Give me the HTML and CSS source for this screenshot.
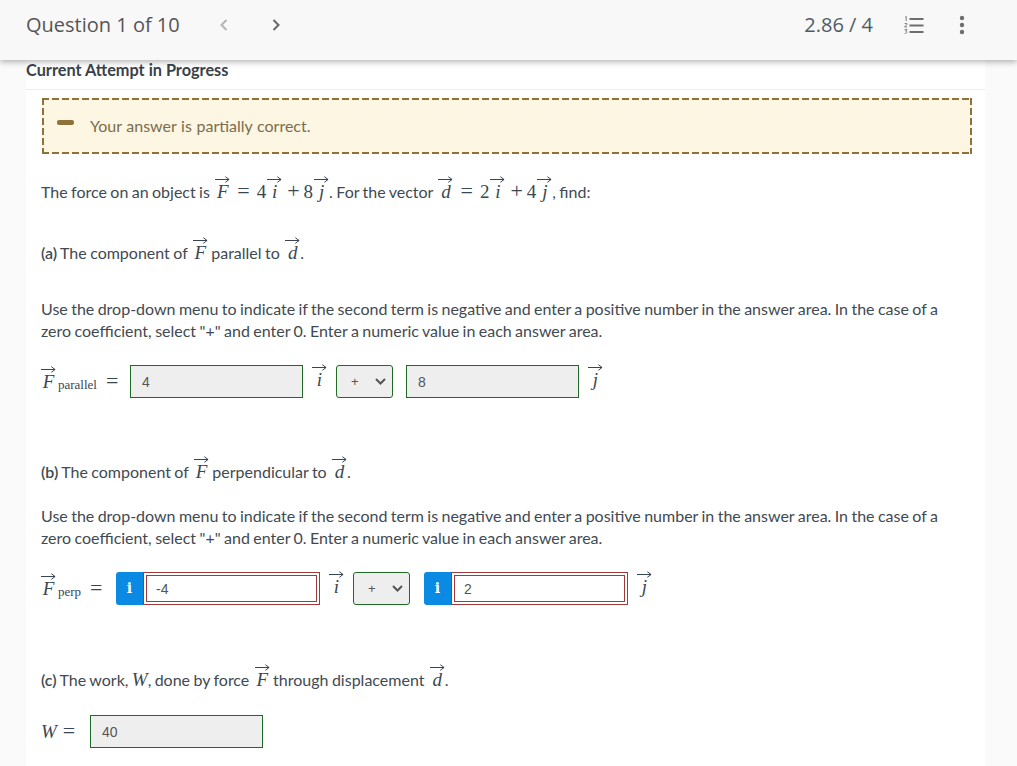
FILE: index.html
```html
<!DOCTYPE html>
<html lang="en">
<head>
  <meta charset="UTF-8">
  <title>Question 1 of 10</title>
  <link rel="stylesheet" href="styles.css">
</head>
<body>
  <svg class="defs" width="0" height="0">
    <symbol id="arrow" viewBox="0 0 16 7">
      <path d="M0 3.5H15M11 .5L15 3.5L11 6.5" fill="none" stroke="#2b3a46" stroke-width="1"/>
    </symbol>
  </svg>

  <header class="topbar">
    <div class="topbar-left">
      <span class="title">Question 1 of 10</span>
      <svg class="chev" width="10" height="14" viewBox="0 0 10 14"><path d="M7.5 2L2.5 7L7.5 12" fill="none" stroke="#b5b5b5" stroke-width="2"/></svg>
      <svg class="chev next" width="10" height="14" viewBox="0 0 10 14"><path d="M2.5 2L7.5 7L2.5 12" fill="none" stroke="#666" stroke-width="2"/></svg>
    </div>
    <div class="topbar-right">
      <span class="score">2.86 / 4</span>
      <svg class="list-icon" width="20" height="18" viewBox="0 0 20 18">
        <path d="M5.5 3H19.5M5.5 9.5H19.5M5.5 16H19.5" stroke="#6e6e6e" stroke-width="2"/>
        <path d="M1 1.2L2.2 .6V5M.6 7.6H3V8.4L.6 11H3M.6 13.6H3L1.6 15.2C3.6 15.2 3.2 17.6.6 17.4" fill="none" stroke="#6e6e6e" stroke-width=".9"/>
      </svg>
      <svg class="dots" width="6" height="20" viewBox="0 0 6 20">
        <circle cx="3" cy="3" r="2.2" fill="#6e6e6e"/><circle cx="3" cy="10" r="2.2" fill="#6e6e6e"/><circle cx="3" cy="17" r="2.2" fill="#6e6e6e"/>
      </svg>
    </div>
  </header>

  <main class="content">
    <h2 class="attempt">Current Attempt in Progress</h2>

    <div class="question">
      <div class="banner">
        <span class="minus"></span>
        <span>Your answer is partially correct.</span>
      </div>

      <p class="text intro">The force on an object is
        <span class="math"><span class="vec"><svg><use href="#arrow"/></svg><i>F</i></span><span class="op">=</span>4<span class="vec"><svg><use href="#arrow"/></svg><i>i</i></span><span class="op plus">+</span>8<span class="vec"><svg><use href="#arrow"/></svg><i>j</i></span></span>. For the vector
        <span class="math"><span class="vec"><svg><use href="#arrow"/></svg><i>d</i></span><span class="op">=</span>2<span class="vec"><svg><use href="#arrow"/></svg><i>i</i></span><span class="op plus">+</span>4<span class="vec"><svg><use href="#arrow"/></svg><i>j</i></span></span>, find:</p>

      <p class="text part-a"><b class="part">(a)</b> The component of <span class="math"><span class="vec"><svg><use href="#arrow"/></svg><i>F</i></span></span> parallel to <span class="math"><span class="vec"><svg><use href="#arrow"/></svg><i>d</i></span></span>.</p>

      <p class="text note note-a">Use the drop-down menu to indicate if the second term is negative and enter a positive number in the answer area. In the case of a zero coefficient, select "+" and enter 0. Enter a numeric value in each answer area.</p>

      <div class="answer-row row-a">
        <span class="math label label-a"><span class="vec"><svg><use href="#arrow"/></svg><i>F</i></span><sub>parallel</sub><span class="op">=</span></span>
        <span class="field ok">4</span>
        <span class="math unit"><span class="vec"><svg><use href="#arrow"/></svg><i>i</i></span></span>
        <span class="select">+<svg width="11" height="7" viewBox="0 0 11 7"><path d="M1 1L5.5 5.5L10 1" fill="none" stroke="#555" stroke-width="2"/></svg></span>
        <span class="field ok">8</span>
        <span class="math unit"><span class="vec"><svg><use href="#arrow"/></svg><i>j</i></span></span>
      </div>

      <p class="text part-b"><b class="part">(b)</b> The component of <span class="math"><span class="vec"><svg><use href="#arrow"/></svg><i>F</i></span></span> perpendicular to <span class="math"><span class="vec"><svg><use href="#arrow"/></svg><i>d</i></span></span>.</p>

      <p class="text note note-b">Use the drop-down menu to indicate if the second term is negative and enter a positive number in the answer area. In the case of a zero coefficient, select "+" and enter 0. Enter a numeric value in each answer area.</p>

      <div class="answer-row row-b">
        <span class="math label label-b"><span class="vec"><svg><use href="#arrow"/></svg><i>F</i></span><sub>perp</sub><span class="op">=</span></span>
        <span class="info">i</span><span class="field bad">-4</span>
        <span class="math unit"><span class="vec"><svg><use href="#arrow"/></svg><i>i</i></span></span>
        <span class="select">+<svg width="11" height="7" viewBox="0 0 11 7"><path d="M1 1L5.5 5.5L10 1" fill="none" stroke="#555" stroke-width="2"/></svg></span>
        <span class="info">i</span><span class="field bad">2</span>
        <span class="math unit"><span class="vec"><svg><use href="#arrow"/></svg><i>j</i></span></span>
      </div>

      <p class="text part-c"><b class="part">(c)</b> The work, <span class="math"><i class="w">W</i></span>, done by force <span class="math"><span class="vec"><svg><use href="#arrow"/></svg><i>F</i></span></span> through displacement <span class="math"><span class="vec"><svg><use href="#arrow"/></svg><i>d</i></span></span>.</p>

      <div class="answer-row row-c">
        <span class="math label label-c"><i class="w">W</i><span class="op">=</span></span>
        <span class="field ok">40</span>
      </div>
    </div>
  </main>
</body>
</html>
```

FILE: styles.css
```css
* {
  box-sizing: border-box;
}

html, body {
  height: 766px;
  overflow: hidden;
}

body {
  margin: 0;
  background: #fafafa;
  color: #3f4a52;
  font-family: 'Lato', sans-serif;
  font-size: 16px;
}

.defs {
  display: block;
  height: 0;
}

.topbar {
  position: relative;
  z-index: 2;
  height: 60px;
  padding: 0 52px 11px 26px;
  display: flex;
  align-items: center;
  justify-content: space-between;
  background: #f8f8f8;
  box-shadow: 0 2px 6px rgba(0,0,0,0.3);
}

.topbar-left, .topbar-right {
  display: flex;
  align-items: center;
}

.title, .score {
  font-family: 'Open Sans', sans-serif;
  font-size: 20px;
  color: #555;
}

.chev {
  margin-left: 39px;
}

.chev.next {
  margin-left: 42px;
}

.score {
  color: #4f5b66;
}

.list-icon {
  margin-left: 31px;
}

.dots {
  margin-left: 35px;
}

.content {
  width: 959px;
  height: 706px;
  margin-left: 26px;
  background: #fff;
}

.attempt {
  height: 30px;
  margin: 0;
  border-bottom: 1px solid #eee;
  font-size: 16.3px;
  line-height: 20px;
  font-weight: 700;
  color: #37424a;
}

.question {
  padding: 8px 14px 0 15px;
}

/* dashes drawn by hand, the browser's own dashed border is too short */
.banner {
  height: 56px;
  width: 930px;
  margin-left: 1px;
  padding: 0 0 2px 15px;
  display: flex;
  align-items: center;
  gap: 16px;
  background-color: #fdf6e3;
  background-image:
    repeating-linear-gradient(to right, #8f7238 0 7px, transparent 7px 10px),
    repeating-linear-gradient(to right, #8f7238 0 7px, transparent 7px 10px),
    repeating-linear-gradient(to bottom, #8f7238 0 7px, transparent 7px 10px),
    repeating-linear-gradient(to bottom, #8f7238 0 7px, transparent 7px 10px);
  background-size: 100% 2px, 100% 2px, 2px 100%, 2px 100%;
  background-position: top, bottom, left, right;
  background-repeat: no-repeat;
  color: #7c6c4b;
  word-spacing: 0.5px;
}

.minus {
  width: 17px;
  height: 5px;
  margin-top: -6px;
  background: #8f7238;
  border-radius: 2px;
}

.text {
  margin: 0;
  line-height: 22px;
  color: #3f4a52;
  word-spacing: -0.7px;
}

.part {
  font-weight: 600;
}

.intro {
  margin-top: 27px;
}

.part-a {
  margin-top: 39px;
}

.note-a {
  margin-top: 34px;
}

.row-a {
  margin-top: 23px;
}

.part-b {
  margin-top: 63px;
}

.note-b {
  margin-top: 22px;
}

.row-b {
  margin-top: 23px;
}

.part-c {
  margin-top: 64px;
}

.row-c {
  margin-top: 24px;
}

.note {
  width: 910px;
}

.math {
  font-family: 'Liberation Serif', serif;
  font-size: 19px;
  line-height: 1;
  color: #3a4750;
  white-space: nowrap;
  word-spacing: 0;
}

.math i {
  font-style: italic;
}

.vec {
  position: relative;
  display: inline-block;
  min-width: 15px;
  margin-left: 1px;
  text-align: center;
}

.text .vec:first-child {
  margin-left: 2px;
}

.vec svg {
  position: absolute;
  left: 0;
  top: -6px;
  width: 15px;
  height: 7px;
}

.op {
  margin: 0 7px;
  font-size: 22px;
  line-height: 0;
}

.op.plus {
  margin: 0 4px 0 5px;
}

.answer-row {
  height: 33px;
  display: flex;
  align-items: center;
}

.label {
  display: flex;
  align-items: center;
  padding-bottom: 1px;
}

.label .vec {
  margin-left: 0;
}

.label sub {
  font-size: 13px;
  line-height: 1;
  margin: 7px 0 0 2px;
}

.label .op {
  margin: 0 0 0 9px;
}

.label-a {
  width: 89px;
}

.label-b {
  width: 75px;
}

.label-c {
  width: 49px;
}

.label-c .op {
  margin-left: 6px;
}

.field {
  width: 173px;
  height: 33px;
  padding-left: 11px;
  display: flex;
  align-items: center;
  font-family: 'Liberation Sans', sans-serif;
  font-size: 14px;
  color: #555;
}

.field.ok {
  background: #eee;
  border: 1px solid #1f6b26;
}

.field.bad {
  width: 177px;
  padding-left: 12px;
  background: #fff;
  border: 1px solid #a33a3a;
  outline: 1px solid #a33a3a;
  outline-offset: -4px;
}

.unit {
  width: 33px;
  display: flex;
  justify-content: center;
  padding-bottom: 4px;
}

.unit .vec {
  margin-left: 0;
}

.select {
  width: 57px;
  height: 33px;
  margin-right: 13px;
  padding: 0 6px 0 14px;
  display: flex;
  align-items: center;
  justify-content: space-between;
  background: #eee;
  border: 1px solid #1f6b26;
  border-radius: 3px;
  font-family: 'Liberation Sans', sans-serif;
  font-size: 13px;
  color: #555;
}

.row-b .select {
  margin-right: 14px;
}

.info {
  width: 27px;
  height: 33px;
  display: flex;
  align-items: center;
  justify-content: center;
  padding-bottom: 2px;
  background: #0a8ae2;
  border-radius: 3px 0 0 3px;
  color: #fff;
  font-family: 'DejaVu Serif', serif;
  font-weight: 700;
  font-size: 14px;
}
```
